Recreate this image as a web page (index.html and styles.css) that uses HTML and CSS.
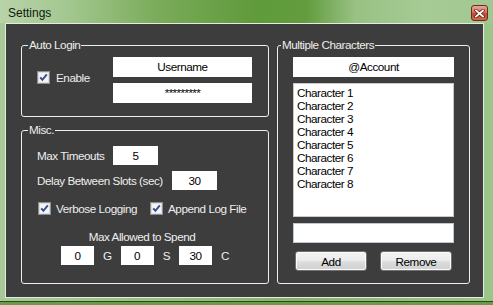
FILE: index.html
```html
<!DOCTYPE html>
<html>
<head>
<meta charset="utf-8">
<link rel="stylesheet" href="styles.css">
</head>
<body>
<div class="window">
  <div class="titlebar">
    <span class="title">Settings</span>
    <span class="close">
      <svg width="11" height="9" viewBox="0 0 11 9"><path d="M2 1.5 L9 7.5 M9 1.5 L2 7.5" stroke="#5a2014" stroke-width="3.4" stroke-linecap="square"/><path d="M2 1.5 L9 7.5 M9 1.5 L2 7.5" stroke="#ffffff" stroke-width="1.8" stroke-linecap="square"/></svg>
    </span>
  </div>
  <div class="client">
    <div class="col-left">
      <fieldset class="group auto-login">
        <legend>Auto Login</legend>
        <label class="check enable">
          <span class="box"><svg width="13" height="13" viewBox="0 0 13 13"><rect x="0.5" y="0.5" width="12" height="12" fill="#e9e9ec" stroke="#8e8f8f"/><rect x="1.5" y="1.5" width="10" height="10" fill="#f4f4f6" stroke="#dcdde0"/><path d="M3.2 6.4 L5.4 8.8 L9.8 3.4" stroke="#3c4f91" stroke-width="2" fill="none"/></svg></span>
          <span>Enable</span>
        </label>
        <div class="login-fields">
          <div class="field wide">Username</div>
          <div class="field wide pw">*********</div>
        </div>
      </fieldset>
      <fieldset class="group misc">
        <legend>Misc.</legend>
        <div class="row r1"><span class="lbl lbl-timeouts">Max Timeouts</span><div class="field small">5</div></div>
        <div class="row r2"><span class="lbl lbl-delay">Delay Between Slots (sec)</span><div class="field small">30</div></div>
        <div class="row checks">
          <label class="check first">
            <span class="box"><svg width="13" height="13" viewBox="0 0 13 13"><rect x="0.5" y="0.5" width="12" height="12" fill="#e9e9ec" stroke="#8e8f8f"/><rect x="1.5" y="1.5" width="10" height="10" fill="#f4f4f6" stroke="#dcdde0"/><path d="M3.2 6.4 L5.4 8.8 L9.8 3.4" stroke="#3c4f91" stroke-width="2" fill="none"/></svg></span>
            <span>Verbose Logging</span>
          </label>
          <label class="check">
            <span class="box"><svg width="13" height="13" viewBox="0 0 13 13"><rect x="0.5" y="0.5" width="12" height="12" fill="#e9e9ec" stroke="#8e8f8f"/><rect x="1.5" y="1.5" width="10" height="10" fill="#f4f4f6" stroke="#dcdde0"/><path d="M3.2 6.4 L5.4 8.8 L9.8 3.4" stroke="#3c4f91" stroke-width="2" fill="none"/></svg></span>
            <span>Append Log File</span>
          </label>
        </div>
        <div class="spend-title">Max Allowed to Spend</div>
        <div class="money">
          <div class="field coin">0</div><span>G</span>
          <div class="field coin">0</div><span>S</span>
          <div class="field coin">30</div><span>C</span>
        </div>
      </fieldset>
    </div>
    <fieldset class="group chars">
      <legend>Multiple Characters</legend>
      <div class="field account">@Account</div>
      <div class="listbox">
        <div>Character 1</div>
        <div>Character 2</div>
        <div>Character 3</div>
        <div>Character 4</div>
        <div>Character 5</div>
        <div>Character 6</div>
        <div>Character 7</div>
        <div>Character 8</div>
      </div>
      <div class="field entry"></div>
      <div class="buttons">
        <button class="btn">Add</button>
        <button class="btn">Remove</button>
      </div>
    </fieldset>
  </div>
</div>
</body>
</html>
```

FILE: styles.css
```css
* { box-sizing: border-box; }
html, body { margin: 0; padding: 0; }
body {
  width: 493px;
  height: 305px;
  overflow: hidden;
  font-family: "Liberation Sans", Arial, sans-serif;
  font-size: 11.7px;
  letter-spacing: -0.45px;
  white-space: nowrap;
}
.window {
  width: 493px;
  height: 305px;
  display: flex;
  flex-direction: column;
  background: linear-gradient(90deg, #a9ca98 0%, #93bd7c 40%, #86b46c 60%, #9cc58a 100%);
  box-shadow: inset 0 -3px 0 #6a9a4a, inset 0 -4px 0 #2d4a1e;
}
.titlebar {
  height: 23px;
  flex: none;
  display: flex;
  justify-content: space-between;
  align-items: flex-start;
  padding: 0 5px 0 8px;
  background: linear-gradient(90deg, #b8d3a9 0%, #a3c790 14%, #7aab5a 32%, #5f9a3b 52%, #629c3e 62%, #98c183 72%, #a6cb95 86%, #a2c891 100%);
}
.title {
  font-size: 12px;
  letter-spacing: 0;
  line-height: 14px;
  margin-top: 6px;
  color: #101810;
}
.close {
  width: 17px;
  height: 16px;
  margin-top: 5px;
  border: 1px solid #6e2a1c;
  border-radius: 3px;
  background: linear-gradient(180deg, #eba595 0%, #d9735c 45%, #c14a30 55%, #d2684c 100%);
  display: flex;
  align-items: center;
  justify-content: center;
}
.close svg { display: block; }
.client {
  flex: 1;
  margin: 0 9px 7px 5px;
  border: 1px solid #e4ecde;
  background: #3d3d3d;
  display: flex;
  gap: 8px;
  padding: 14px 13px 13px 15px;
  color: #eeeeee;
}
.col-left {
  width: 248px;
  display: flex;
  flex-direction: column;
}
.group {
  margin: 0;
  min-width: 0;
  border: 1px solid #eeeeee;
  border-radius: 3px;
}
.group legend {
  padding: 0 1px;
  line-height: 14px;
  color: #eeeeee;
  margin-left: -9px;
}
.auto-login {
  height: 79px;
  padding: 5px 15px 12px 15px;
  display: flex;
  align-items: center;
}
.check {
  display: flex;
  align-items: center;
  gap: 5px;
  line-height: 15px;
}
.check .box { width: 13px; height: 13px; display: block; }
.check .box svg { display: block; }
.enable {
  width: 76px;
  margin-bottom: 6px;
  gap: 6px;
}
.login-fields {
  display: flex;
  flex-direction: column;
  gap: 6px;
}
.field {
  background: #ffffff;
  color: #000000;
  text-align: center;
  line-height: 20px;
  height: 20px;
}
.wide { width: 139px; }
.pw { letter-spacing: -0.6px; }
.misc {
  flex: 1;
  margin-top: 6px;
  padding: 9px 15px 0 15px;
  display: flex;
  flex-direction: column;
}
.row {
  display: flex;
  align-items: center;
}
.lbl-timeouts { width: 76px; }
.lbl-delay { width: 135px; }
.r2 { margin-top: 6px; }
.small { width: 45px; height: 19px; line-height: 19px; }
.checks {
  margin-top: 11px;
  padding-left: 1px;
}
.check.first { width: 112px; }
.spend-title {
  margin-top: 13px;
  line-height: 15px;
  text-align: center;
  padding-right: 6px;
}
.money {
  margin-top: 2px;
  display: flex;
  justify-content: center;
  align-items: center;
  gap: 9px;
}
.coin { width: 33px; height: 19px; line-height: 19px; }
.chars {
  width: 193px;
  padding: 5px 15px 12px 15px;
  display: flex;
  flex-direction: column;
}
.chars legend { margin-left: -12px; }
.account { height: 20px; }
.listbox {
  flex: 1;
  margin-top: 6px;
  background: #ffffff;
  border: 1px solid #c9c9c9;
  color: #000000;
  padding: 2px 3px;
  line-height: 13px;
}
.entry {
  margin-top: 6px;
  border: 1px solid #bcc8d4;
}
.buttons {
  margin-top: 8px;
  display: flex;
  justify-content: space-between;
  padding: 0 2px;
}
.btn {
  width: 72px;
  height: 20px;
  padding: 0;
  font: inherit;
  letter-spacing: inherit;
  color: #000000;
  border: 1px solid #707070;
  border-radius: 3px;
  background: linear-gradient(180deg, #f4f4f4 0%, #ececec 48%, #dedede 52%, #d0d0d0 100%);
  box-shadow: inset 0 0 0 1px #fbfbfb;
}
```
